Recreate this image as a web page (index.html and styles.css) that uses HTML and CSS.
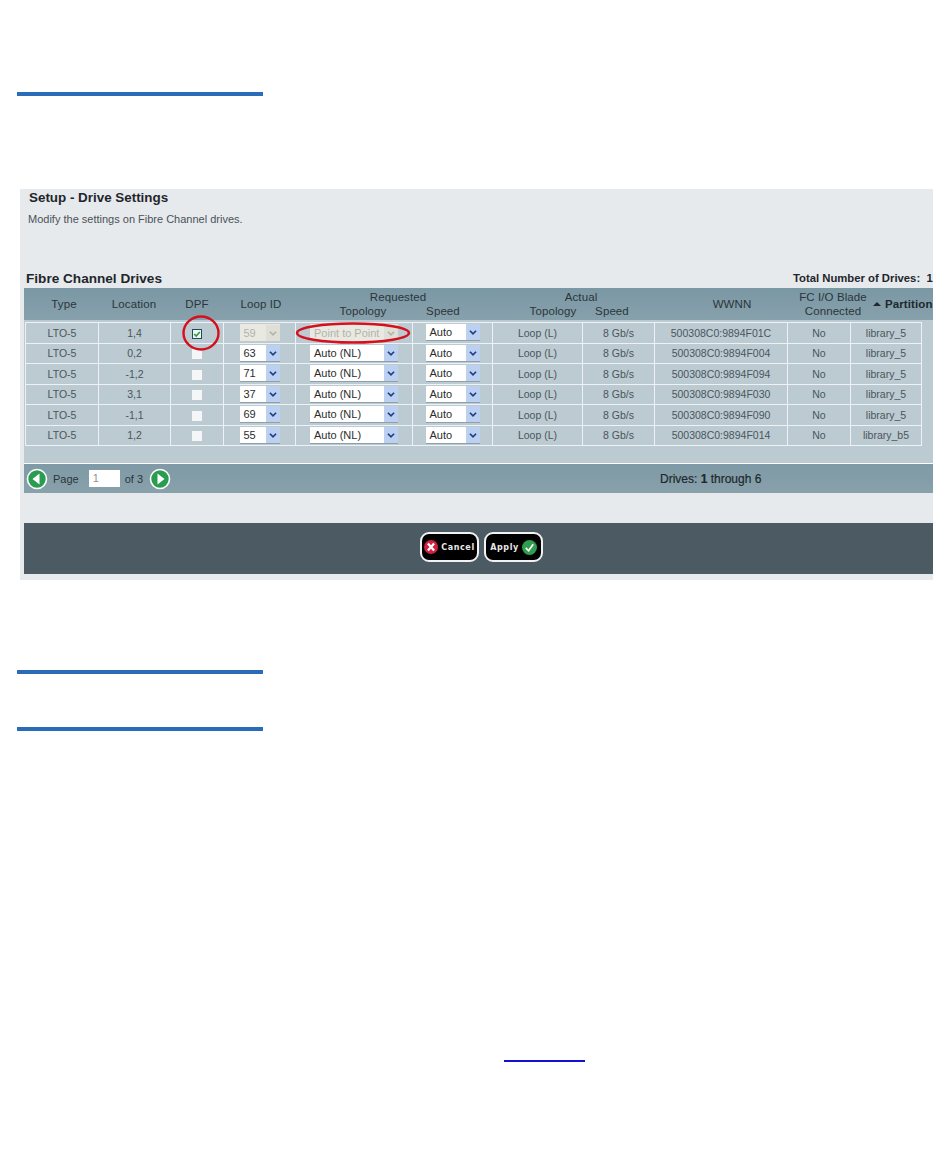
FILE: index.html
```html
<!DOCTYPE html>
<html lang="en">
<head>
<meta charset="utf-8">
<title>Setup - Drive Settings</title>
<link rel="stylesheet" href="styles.css">
</head>
<body>
<svg width="0" height="0" class="defs">
  <symbol id="chev" viewBox="0 0 16 17"><path d="M4.5 6.5 8 10l3.5-3.5" fill="none" stroke="#22407e" stroke-width="2"/></symbol>
  <symbol id="chev-off" viewBox="0 0 16 17"><path d="M4.5 6.5 8 10l3.5-3.5" fill="none" stroke="#b4b4a8" stroke-width="2"/></symbol>
</svg>
<main class="page">
  <div class="rule"></div>
  <section class="panel">
    <h1 class="title">Setup - Drive Settings</h1>
    <p class="intro">Modify the settings on Fibre Channel drives.</p>
    <div class="table-heading">
      <h2>Fibre Channel Drives</h2>
      <span class="total">Total Number of Drives:&nbsp; 17</span>
    </div>
    <div class="thead">
      <span>Type</span><span>Location</span><span>DPF</span><span>Loop ID</span><i></i>
      <div class="group group-req"><span>Requested</span><div class="sub"><span class="s-top">Topology</span><span class="s-speed">Speed</span></div></div>
      <i></i>
      <div class="group group-act"><span>Actual</span><div class="sub"><span class="a-top">Topology</span><span class="a-speed">Speed</span></div></div>
      <i></i>
      <span>WWNN</span>
      <span class="two-line">FC I/O Blade<br>Connected</span>
      <span class="partition"><b class="tri"></b>Partition</span>
    </div>
    <div class="tbody">
      <table class="drives">
        <colgroup><col class="c1"><col class="c2"><col class="c3"><col class="c4"><col class="c5"><col class="c6"><col class="c7"><col class="c8"><col class="c9"><col class="c10"><col class="c11"></colgroup>
        <tr>
          <td>LTO-5</td><td>1,4</td>
          <td><span class="check on"><svg viewBox="0 0 10 10" width="8" height="8"><path d="M1.5 5 4 7.5 8.5 2.5" fill="none" stroke="#2f9a3c" stroke-width="2"/></svg></span></td>
          <td><span class="sel off w-loop">59<span class="arr"><svg width="16" height="17"><use href="#chev-off"/></svg></span></span></td>
          <td><span class="sel off w-topo">Point to Point<span class="arr"><svg width="16" height="17"><use href="#chev-off"/></svg></span></span></td>
          <td><span class="sel w-speed">Auto<span class="arr"><svg width="16" height="17"><use href="#chev"/></svg></span></span></td>
          <td>Loop (L)</td><td>8 Gb/s</td><td>500308C0:9894F01C</td><td>No</td><td>library_5</td>
        </tr>
        <tr>
          <td>LTO-5</td><td>0,2</td><td><span class="check"></span></td>
          <td><span class="sel w-loop">63<span class="arr"><svg width="16" height="17"><use href="#chev"/></svg></span></span></td>
          <td><span class="sel w-topo">Auto (NL)<span class="arr"><svg width="16" height="17"><use href="#chev"/></svg></span></span></td>
          <td><span class="sel w-speed">Auto<span class="arr"><svg width="16" height="17"><use href="#chev"/></svg></span></span></td>
          <td>Loop (L)</td><td>8 Gb/s</td><td>500308C0:9894F004</td><td>No</td><td>library_5</td>
        </tr>
        <tr>
          <td>LTO-5</td><td>-1,2</td><td><span class="check"></span></td>
          <td><span class="sel w-loop">71<span class="arr"><svg width="16" height="17"><use href="#chev"/></svg></span></span></td>
          <td><span class="sel w-topo">Auto (NL)<span class="arr"><svg width="16" height="17"><use href="#chev"/></svg></span></span></td>
          <td><span class="sel w-speed">Auto<span class="arr"><svg width="16" height="17"><use href="#chev"/></svg></span></span></td>
          <td>Loop (L)</td><td>8 Gb/s</td><td>500308C0:9894F094</td><td>No</td><td>library_5</td>
        </tr>
        <tr>
          <td>LTO-5</td><td>3,1</td><td><span class="check"></span></td>
          <td><span class="sel w-loop">37<span class="arr"><svg width="16" height="17"><use href="#chev"/></svg></span></span></td>
          <td><span class="sel w-topo">Auto (NL)<span class="arr"><svg width="16" height="17"><use href="#chev"/></svg></span></span></td>
          <td><span class="sel w-speed">Auto<span class="arr"><svg width="16" height="17"><use href="#chev"/></svg></span></span></td>
          <td>Loop (L)</td><td>8 Gb/s</td><td>500308C0:9894F030</td><td>No</td><td>library_5</td>
        </tr>
        <tr>
          <td>LTO-5</td><td>-1,1</td><td><span class="check"></span></td>
          <td><span class="sel w-loop">69<span class="arr"><svg width="16" height="17"><use href="#chev"/></svg></span></span></td>
          <td><span class="sel w-topo">Auto (NL)<span class="arr"><svg width="16" height="17"><use href="#chev"/></svg></span></span></td>
          <td><span class="sel w-speed">Auto<span class="arr"><svg width="16" height="17"><use href="#chev"/></svg></span></span></td>
          <td>Loop (L)</td><td>8 Gb/s</td><td>500308C0:9894F090</td><td>No</td><td>library_5</td>
        </tr>
        <tr>
          <td>LTO-5</td><td>1,2</td><td><span class="check"></span></td>
          <td><span class="sel w-loop">55<span class="arr"><svg width="16" height="17"><use href="#chev"/></svg></span></span></td>
          <td><span class="sel w-topo">Auto (NL)<span class="arr"><svg width="16" height="17"><use href="#chev"/></svg></span></span></td>
          <td><span class="sel w-speed">Auto<span class="arr"><svg width="16" height="17"><use href="#chev"/></svg></span></span></td>
          <td>Loop (L)</td><td>8 Gb/s</td><td>500308C0:9894F014</td><td>No</td><td>library_b5</td>
        </tr>
      </table>
    </div>
    <div class="pager">
      <svg class="nav" width="22" height="22" viewBox="0 0 22 22"><circle cx="11" cy="11" r="9.5" fill="#2a9c50" stroke="#fff" stroke-width="1.6"/><path d="M13.5 5.5v11L6.5 11z" fill="#fff"/></svg>
      <span class="page-label">Page</span>
      <span class="page-input">1</span>
      <span class="page-of">of 3</span>
      <svg class="nav" width="22" height="22" viewBox="0 0 22 22"><circle cx="11" cy="11" r="9.5" fill="#2a9c50" stroke="#fff" stroke-width="1.6"/><path d="M8.5 5.5v11l7-5.5z" fill="#fff"/></svg>
      <span class="range">Drives: <b>1</b> through 6</span>
    </div>
    <div class="actions">
      <button class="btn" type="button">
        <svg width="14" height="14" viewBox="0 0 16 16"><circle cx="8" cy="8" r="8" fill="#d0213f"/><path d="M4.5 4l7 8M11.5 4l-7 8" stroke="#fff" stroke-width="2.6"/></svg>
        Cancel
      </button>
      <button class="btn" type="button">
        Apply
        <svg width="15" height="15" viewBox="0 0 16 16"><circle cx="8" cy="8" r="8" fill="#2f9e4f"/><path d="M4 8.5 7 11.5 12 4.5" fill="none" stroke="#fff" stroke-width="1.8"/></svg>
      </button>
    </div>
    <svg class="mark mark-dpf" width="40" height="38" viewBox="0 0 40 38"><ellipse cx="20" cy="19" rx="17.5" ry="16.5" fill="none" stroke="#d4101e" stroke-width="2.4"/></svg>
    <svg class="mark mark-topo" width="118" height="24" viewBox="0 0 118 24"><ellipse cx="59" cy="12" rx="56" ry="9.5" fill="none" stroke="#d4101e" stroke-width="2.4"/></svg>
  </section>
  <div class="rule rule-second"></div>
  <div class="rule rule-third"></div>
  <a class="link" href="#" aria-label="link"></a>
</main>
</body>
</html>
```
FILE: styles.css
```css
* { box-sizing: border-box; }
html, body { margin: 0; padding: 0; background: #fff; }
body { font-family: "Liberation Sans", Arial, sans-serif; color: #3c464c; }
.defs { position: absolute; }
.page { padding-top: 92px; height: 1161px; overflow: hidden; }

.rule { width: 246px; height: 4px; margin-left: 17px; background: #2b6cb8; }
.rule-second { margin-top: 90px; }
.rule-third { margin-top: 53px; }
.link { display: block; width: 81px; height: 2px; margin: 329px 0 0 504px; background: #1410d0; }

.panel { position: relative; width: 913px; height: 391px; margin: 93px 0 0 20px; padding-left: 4px; background: #e6eaed; overflow: hidden; }
.title { margin: 0; padding: 1px 0 0 5px; font-size: 13.4px; line-height: 15px; font-weight: 700; color: #1f262b; }
.intro { margin: 8px 0 0 4px; font-size: 11px; line-height: 13px; color: #4a5258; }
.table-heading { display: flex; justify-content: space-between; align-items: center; margin-top: 44px; height: 16px; padding-left: 2px; white-space: nowrap; }
.table-heading h2 { margin: 0; font-size: 13.6px; font-weight: 700; color: #1f262b; }
.total { font-size: 11.3px; font-weight: 700; color: #1f262b; position: relative; left: 6px; }

.thead { display: grid; grid-template-columns: 78px 62px 64px 64px 20px 170px 38px 120px 29px 124px 78px 61px; align-items: center; height: 32px; margin-top: 2px; padding-left: 1px; background: linear-gradient(#7a97a4, #87a1ac); font-size: 11.5px; line-height: 14px; text-align: center; color: #2c353a; letter-spacing: .1px; white-space: nowrap; }
.group > span { display: block; }
.sub { display: flex; }
.s-top { width: 100px; }
.s-speed { width: 60px; }
.a-top { width: 64px; }
.a-speed { width: 54px; }
.partition { font-weight: 700; color: #20282d; text-align: left; }
.tri { display: inline-block; width: 0; height: 0; margin: 0 4px 2px 1px; border: 4px solid transparent; border-top: 0; border-bottom: 4px solid #20282d; }

.tbody { height: 144px; padding: 2px 0 0 1px; background: #bccad1; border-bottom: 1px solid #fff; }
.drives { width: 896px; table-layout: fixed; border-collapse: collapse; background: #bccad1; font-size: 10.5px; color: #4a565c; text-align: center; }
.drives td { height: 20.5px; padding: 0; border: 1px solid #eef2f4; white-space: nowrap; vertical-align: middle; }
.c1 { width: 73px; } .c2 { width: 72px; } .c3 { width: 53px; } .c4 { width: 72px; }
.c5 { width: 117px; } .c6 { width: 80px; } .c7 { width: 90px; } .c8 { width: 72px; }
.c9 { width: 133px; } .c10 { width: 63px; } .c11 { width: 71px; }

.check { display: inline-flex; align-items: center; justify-content: center; width: 10px; height: 10px; background: #f4f6f7; vertical-align: middle; }
.check.on { border: 1px solid #1f4a58; background: #f0f4f4; }
.sel { display: inline-flex; align-items: center; justify-content: space-between; height: 17px; padding-left: 4px; background: #fff; border-bottom: 1px solid #8fa0aa; font-size: 11px; color: #2c2c2c; text-align: left; vertical-align: middle; }
.arr { display: flex; width: 14px; height: 16px; background: #bcd0f2; justify-content: center; overflow: hidden; flex: none; }
.sel.off { background: #e9e9e2; color: #b2b2ac; border-bottom: 0; }
.sel.off .arr { background: #dedfd6; }
.w-loop { width: 40px; }
.w-topo { width: 88px; }
.w-speed { width: 54px; }

.pager { display: flex; align-items: center; height: 29px; padding-left: 2px; background: linear-gradient(#7f9aa6, #88a1ab); font-size: 11px; color: #2c353a; }
.page-label { margin-left: 5px; }
.page-input { width: 31px; height: 17px; margin-left: 10px; padding-left: 4px; background: #fff; font-size: 11px; line-height: 17px; color: #8a9296; }
.page-of { margin: 0 6px 0 5px; }
.range { position: absolute; left: 640px; font-size: 12px; color: #20282d; -webkit-text-stroke: .2px #20282d; }
.range b { font-weight: 700; }

.actions { display: flex; justify-content: center; align-items: flex-start; gap: 5px; height: 51px; margin-top: 30px; padding: 9px 0 0 6px; background: #4c5b63; }
.btn { display: inline-flex; align-items: center; justify-content: center; gap: 3px; width: 59px; height: 30px; padding: 0; background: #000; border: 2px solid #f2f2f2; border-radius: 9px; font-family: "DejaVu Sans", sans-serif; font-size: 8px; font-weight: 700; color: #e8e8e8; letter-spacing: .6px; }

.mark { position: absolute; }
.mark-dpf { left: 161px; top: 125px; }
.mark-topo { left: 274px; top: 132px; }
```
